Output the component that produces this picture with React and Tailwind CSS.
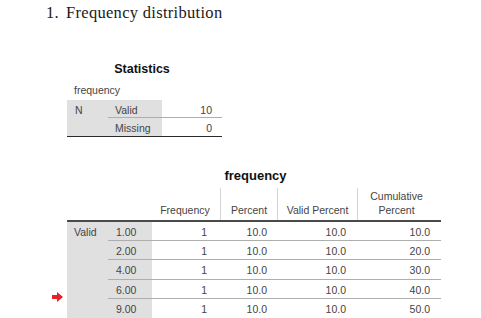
import React from "react";

const sans = "font-['Liberation_Sans',Arial,sans-serif]";

const stats = [
  { label: "Valid", value: "10" },
  { label: "Missing", value: "0" },
];

const rows = [
  { v: "1.00", f: "1", p: "10.0", vp: "10.0", c: "10.0", h: "h-[19px]" },
  { v: "2.00", f: "1", p: "10.0", vp: "10.0", c: "20.0", h: "h-[19px]" },
  { v: "4.00", f: "1", p: "10.0", vp: "10.0", c: "30.0", h: "h-[20px]" },
  { v: "6.00", f: "1", p: "10.0", vp: "10.0", c: "40.0", h: "h-[19px]" },
  { v: "9.00", f: "1", p: "10.0", vp: "10.0", c: "50.0", h: "h-[20px]" },
];

const RedArrow = () => (
  <svg width="11" height="10" viewBox="0 0 11 10">
    <rect x="0" y="3" width="6" height="4" fill="#e8202a" />
    <polygon points="5,0 11,5 5,10" fill="#e8202a" />
  </svg>
);

export default function App() {
  return (
    <div className="relative w-[481px] h-[318px] overflow-hidden bg-white">
      {/* heading */}
      <div className="flex gap-[7px] pl-[46px] pt-[3px] h-[26px] text-[16.5px] leading-[20px] tracking-[0.3px] text-[#1a1a1a] font-['Liberation_Serif','Times_New_Roman',serif]">
        <span>1.</span>
        <span>Frequency distribution</span>
      </div>

      {/* statistics table */}
      <div className={`${sans} ml-[67px] w-[155px] mt-[35px] text-[#444]`}>
        <div className="h-[16px] leading-[16px] text-[12.5px] font-bold text-[#111] text-center pr-[5px]">
          Statistics
        </div>
        <div className="h-[23px] pt-[5px] pl-[7px] text-[10.5px] leading-[16px]">frequency</div>
        <div className="flex border-b border-[#2a2a2a] text-[10.5px]">
          <div className="w-[41px] bg-[#e0e0e0] pl-[8px] pt-[3px] leading-[14px]">N</div>
          <div className="flex flex-col">
            {stats.map((s, i) => (
              <div key={s.label} className={`flex ${i === 0 ? "h-[18px] border-b border-[#aeaeae]" : "h-[18px]"}`}>
                <div className="w-[54px] bg-[#e0e0e0] pl-[7px] pt-[3px] leading-[14px]">{s.label}</div>
                <div className="w-[60px] text-right pr-[10px] pt-[3px] leading-[14px]">{s.value}</div>
              </div>
            ))}
          </div>
        </div>
      </div>

      {/* frequency table */}
      <div className={`${sans} ml-[67px] w-[374px] mt-[31px] text-[#444] text-[10.5px]`}>
        <div className="h-[20px] leading-[16px] text-[13px] font-bold text-[#111] text-center pl-[3px]">
          frequency
        </div>
        <div className="flex h-[34px] items-end border-b-2 border-[#4a4a4a] leading-[14px]">
          <div className="w-[85px]" />
          <div className="w-[68px] h-full flex items-end justify-center pb-[3px] pr-[2px]">Frequency</div>
          <div className="w-[57px] h-full flex items-end justify-center pb-[3px] border-l border-[#d4d4d4]">Percent</div>
          <div className="w-[80px] h-full flex items-end justify-center pb-[3px] border-l border-[#d4d4d4]">Valid Percent</div>
          <div className="w-[84px] h-full flex flex-col items-center justify-end pb-[3px] pr-[6px] border-l border-[#d4d4d4]">
            <span>Cumulative</span>
            <span>Percent</span>
          </div>
        </div>
        <div className="flex">
          <div className="w-[41px] bg-[#e0e0e0] pl-[7px] pt-[3px] leading-[14px]">Valid</div>
          <div className="flex flex-col">
            {rows.map((r) => (
              <div key={r.v} className={`flex ${r.h} border-b border-[#aeaeae] leading-[14px]`}>
                <div className="w-[44px] bg-[#e0e0e0] pl-[8px] pt-[3px]">{r.v}</div>
                <div className="w-[68px] text-right pr-[13px] pt-[3px]">{r.f}</div>
                <div className="w-[57px] text-right pr-[10px] pt-[3px]">{r.p}</div>
                <div className="w-[80px] text-right pr-[11px] pt-[3px]">{r.vp}</div>
                <div className="w-[84px] text-right pr-[11px] pt-[3px]">{r.c}</div>
              </div>
            ))}
          </div>
        </div>
      </div>

      <div className="absolute left-[52px] top-[292px]">
        <RedArrow />
      </div>
    </div>
  );
}
